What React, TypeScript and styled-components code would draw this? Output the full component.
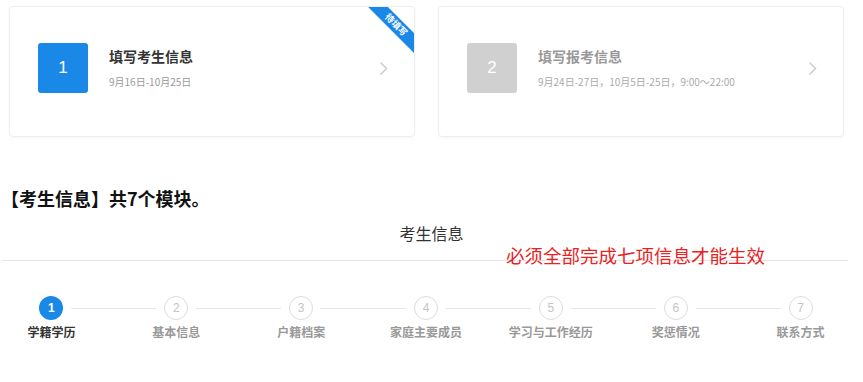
import React from 'react';
import styled, { createGlobalStyle, css } from 'styled-components';

const GlobalStyle = createGlobalStyle`
    body {
        margin: 0;
        background: #fff;
        font-family: "Noto Sans CJK SC", "Noto Sans", Arial, sans-serif;
        color: #333;
    }
`;

const Page = styled.div`
    width: 863px;
    padding-top: 6px;
`;

const CardRow = styled.div`
    display: flex;
    gap: 23px;
    padding-left: 9px;
`;

const Card = styled.div`
    position: relative;
    box-sizing: border-box;
    width: 406px;
    height: 131px;
    display: flex;
    align-items: center;
    padding: 0 0 7px 28px;
    border: 1px solid #eeeeee;
    border-radius: 4px;
    box-shadow: 0 1px 3px rgba(0, 0, 0, 0.04);
    overflow: hidden;
`;

const NumBox = styled.div<{ $active?: boolean }>`
    width: 50px;
    height: 50px;
    flex: none;
    display: flex;
    align-items: center;
    justify-content: center;
    border-radius: 3px;
    background: ${(p) => (p.$active ? '#1a88e6' : '#d0d0d0')};
    color: #fff;
    font-family: "Liberation Sans", Arial, sans-serif;
    font-size: 17px;
`;

const Info = styled.div`
    display: flex;
    flex-direction: column;
    gap: 8px;
    margin-left: 21px;
`;

const CardTitle = styled.div<{ $active?: boolean }>`
    font-size: 14px;
    line-height: 20px;
    font-weight: bold;
    color: ${(p) => (p.$active ? '#333' : '#999')};
`;

const CardDate = styled.div<{ $active?: boolean }>`
    font-size: 10px;
    line-height: 16px;
    color: ${(p) => (p.$active ? '#999' : '#aaa')};
`;

const Chevron = styled.svg`
    margin-left: auto;
    margin-right: 26px;
    margin-top: 1px;
`;

const Ribbon = styled.div`
    position: absolute;
    top: 11px;
    right: -18px;
    width: 72px;
    height: 14px;
    background: #1a88e6;
    color: #fff;
    font-size: 9px;
    line-height: 14px;
    font-weight: bold;
    text-align: center;
    transform: rotate(45deg);
`;

const Heading = styled.div`
    margin: 49px 0 0 1px;
    font-size: 18px;
    line-height: 24px;
    font-weight: bold;
    color: #111;
`;

const TabSection = styled.div`
    position: relative;
    margin-top: 11px;
`;

const TabTitle = styled.div`
    text-align: center;
    font-size: 16px;
    line-height: 24px;
    color: #333;
`;

const Divider = styled.div`
    height: 1px;
    margin: 15px 15px 0 2px;
    background: #e4e4e4;
`;

const Notice = styled.div`
    position: absolute;
    left: 506px;
    top: 22px;
    font-size: 18.5px;
    line-height: 24px;
    color: #e8231f;
`;

const Steps = styled.div`
    display: flex;
    margin: 35px 0 0 -11px;
`;

const Step = styled.div<{ $last?: boolean }>`
    position: relative;
    width: 125px;
    display: flex;
    flex-direction: column;
    align-items: center;

    ${(p) =>
        !p.$last &&
        css`
            &::after {
                content: '';
                position: absolute;
                top: 12px;
                left: calc(50% + 20px);
                width: 85px;
                height: 1px;
                background: #e6e6e6;
            }
        `}
`;

const Circle = styled.div<{ $active?: boolean }>`
    box-sizing: border-box;
    width: 24px;
    height: 24px;
    border-radius: 50%;
    display: flex;
    align-items: center;
    justify-content: center;
    font-family: "Liberation Sans", Arial, sans-serif;
    font-size: 12px;
    ${(p) =>
        p.$active
            ? css`
                  background: #1a88e6;
                  color: #fff;
                  font-weight: bold;
              `
            : css`
                  border: 1px solid #dcdcdc;
                  color: #c4c4c4;
              `}
`;

const StepLabel = styled.div<{ $active?: boolean }>`
    margin-top: 4px;
    font-size: 12px;
    line-height: 16px;
    font-weight: bold;
    white-space: nowrap;
    color: ${(p) => (p.$active ? '#333' : '#999')};
`;

const steps = ['学籍学历', '基本信息', '户籍档案', '家庭主要成员', '学习与工作经历', '奖惩情况', '联系方式'];

const cards = [
    { num: '1', title: '填写考生信息', date: '9月16日-10月25日', active: true },
    { num: '2', title: '填写报考信息', date: '9月24日-27日，10月5日-25日，9:00～22:00', active: false },
];

const App: React.FC = () => {
    return (
        <Page>
            <GlobalStyle />
            <CardRow>
                {cards.map((c) => (
                    <Card key={c.num}>
                        <NumBox $active={c.active}>{c.num}</NumBox>
                        <Info>
                            <CardTitle $active={c.active}>{c.title}</CardTitle>
                            <CardDate $active={c.active}>{c.date}</CardDate>
                        </Info>
                        <Chevron width="9" height="15" viewBox="0 0 9 15">
                            <polyline points="1.5,1.5 7.5,7.5 1.5,13.5" fill="none" stroke="#cfcfcf" strokeWidth="1.6" />
                        </Chevron>
                        {c.active && <Ribbon>待填写</Ribbon>}
                    </Card>
                ))}
            </CardRow>

            <Heading>【考生信息】共7个模块。</Heading>

            <TabSection>
                <TabTitle>考生信息</TabTitle>
                <Divider />
                <Notice>必须全部完成七项信息才能生效</Notice>
            </TabSection>

            <Steps>
                {steps.map((s, i) => (
                    <Step key={s} $last={i === steps.length - 1}>
                        <Circle $active={i === 0}>{i + 1}</Circle>
                        <StepLabel $active={i === 0}>{s}</StepLabel>
                    </Step>
                ))}
            </Steps>
        </Page>
    );
};

export default App;
